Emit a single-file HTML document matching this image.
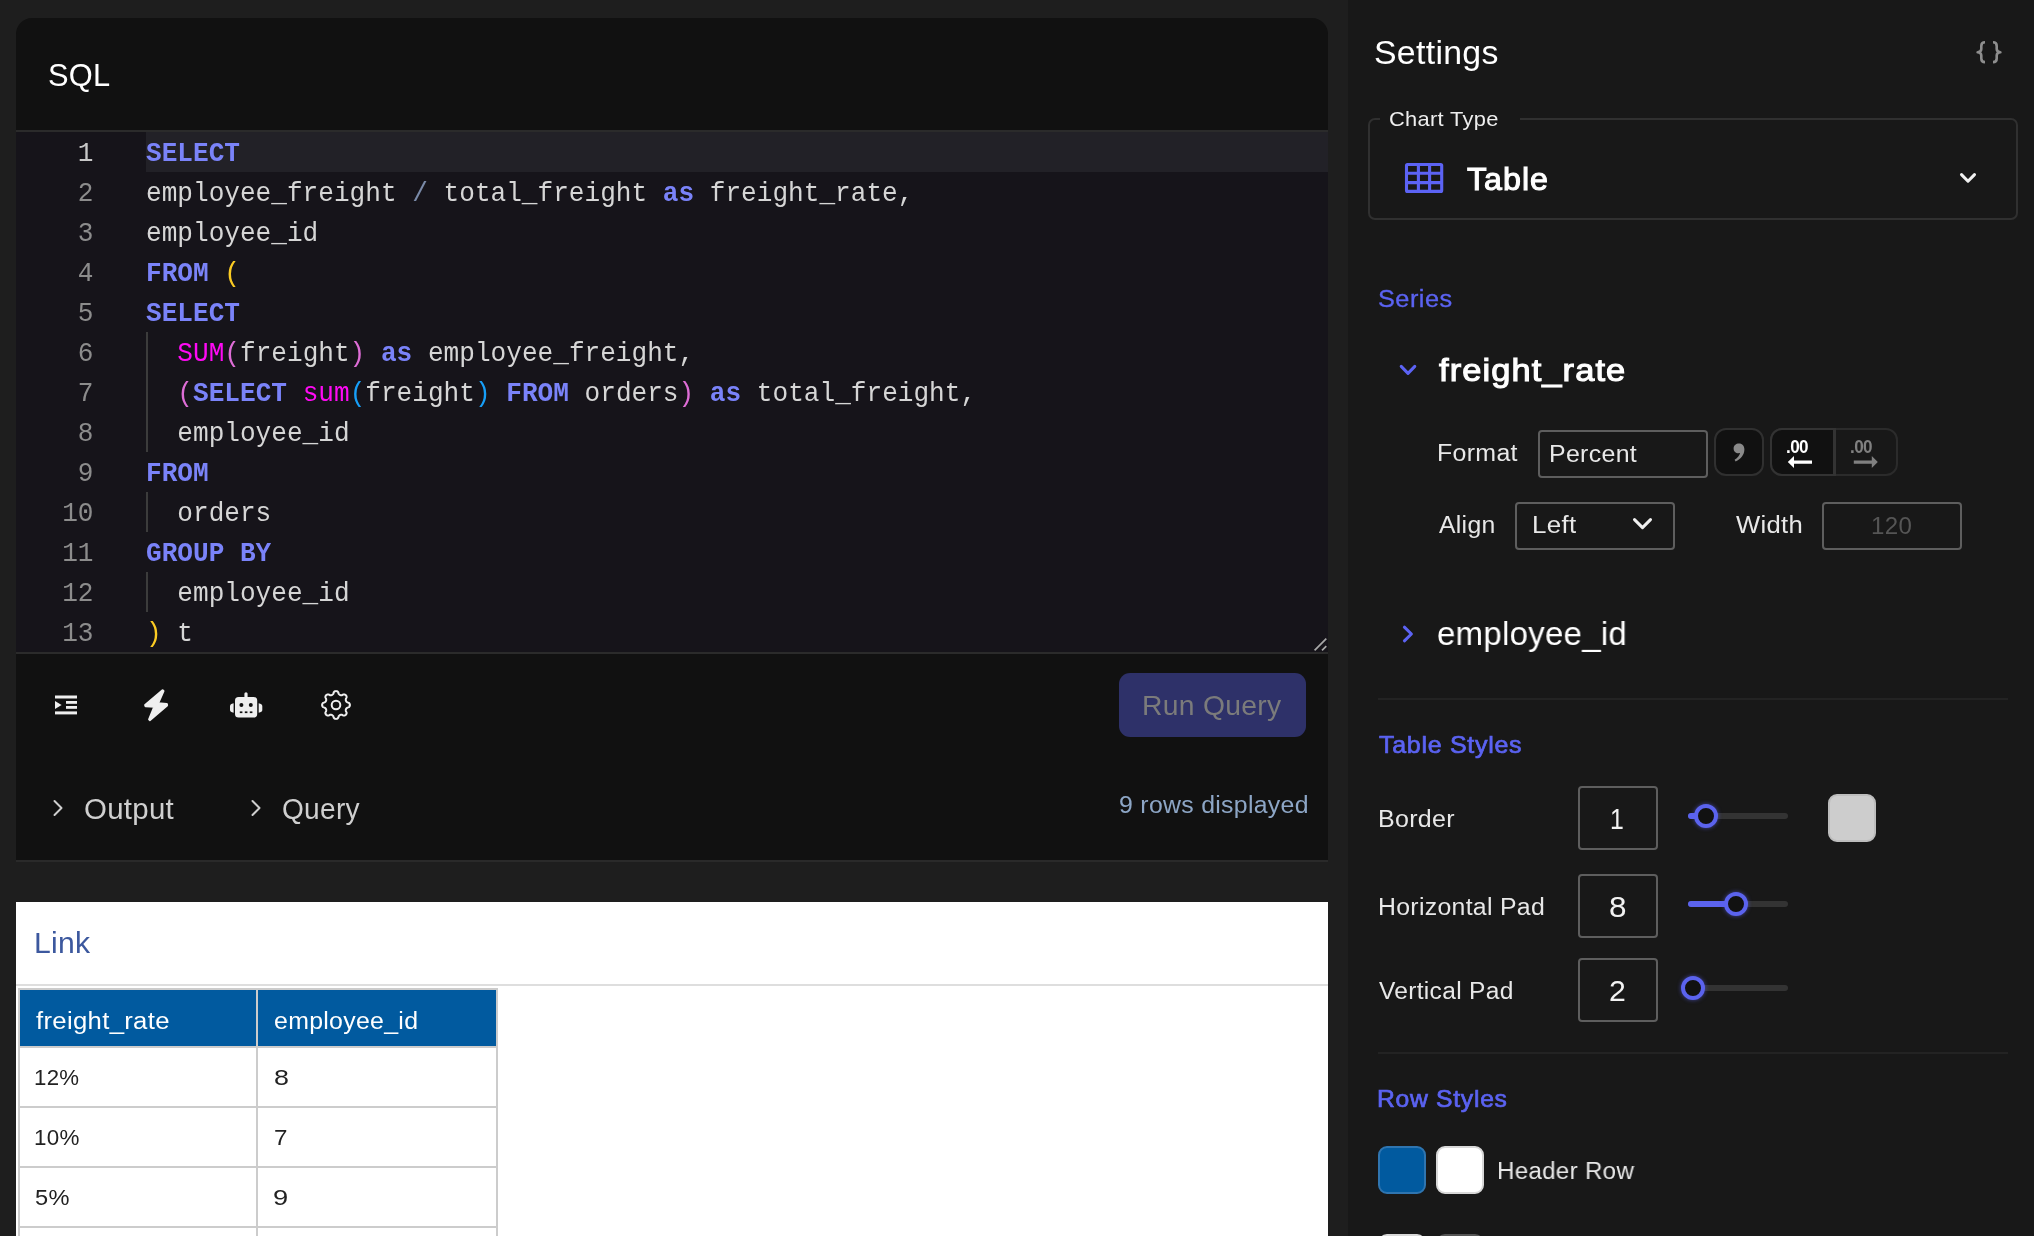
<!DOCTYPE html>
<html>
<head>
<meta charset="utf-8">
<title>SQL</title>
<style>
*{box-sizing:border-box;margin:0;padding:0}
html,body{width:2034px;height:1236px;overflow:hidden;background:#1e1e1e;font-family:"Liberation Sans",sans-serif;color:#e8e8e8}
#wrap{position:absolute;left:0;top:0;width:2034px;height:1236px;will-change:transform}
.abs{position:absolute}
.t{position:absolute;white-space:nowrap;line-height:1}
/* left card */
#card{position:absolute;left:16px;top:18px;width:1312px;height:844px;background:#111111;border-radius:16px 16px 0 0;border-bottom:2px solid #2a2a2a}
#editor{position:absolute;left:16px;top:130px;width:1312px;height:524px;background:#16141a;border-top:2px solid #2b2b2b;border-bottom:2px solid #2b2b2b;overflow:hidden}
#active{position:absolute;left:130px;top:0;width:1182px;height:40px;background:#222127}
.ln{position:absolute;left:0;width:77.5px;margin-top:2px;text-align:right;font-family:"Liberation Mono",monospace;font-size:28px;line-height:40px;color:#8c8c8c;transform:scaleX(.932);transform-origin:100% 0}
.cl{position:absolute;left:130px;margin-top:2px;font-family:"Liberation Mono",monospace;font-size:28px;line-height:40px;color:#d6d6d6;white-space:pre;transform:scaleX(.932);transform-origin:0 0}
.k{color:#7a83f9;font-weight:bold}
.f{color:#ff0af5}
.p1{color:#fbcb23}
.p2{color:#de6dd6}
.p3{color:#179ff8}
.op{color:#7a8aa8}
.guide{position:absolute;left:130px;width:2px;background:#3c3c3c}
/* white panel */
#white{position:absolute;left:16px;top:902px;width:1312px;height:334px;background:#fff}
#whiteline{position:absolute;left:16px;top:984px;width:1312px;height:2px;background:#dedede}
/* right panel */
#right{position:absolute;left:1348px;top:0;width:686px;height:1236px;background:#181818}
.box{position:absolute;border:2px solid #5e5e5e;border-radius:4px;background:#181818}
.hr{position:absolute;left:1378px;width:630px;height:2px;background:#232323}
.track{position:absolute;height:6px;border-radius:3px;background:#333}
.fill{position:absolute;height:6px;border-radius:3px;background:#5b63ee}
.thumb{position:absolute;width:24px;height:24px;border-radius:12px;border:4px solid #5b63ee;background:#111;box-shadow:0 0 4px rgba(91,99,238,.6)}
.sw{position:absolute;width:48px;height:48px;border-radius:9px}
</style>
</head>
<body>
<div id="wrap">
<div id="card"></div>
<div class="t" id="t_sql" style="left:48.2px;top:58.6px;font-size:32.25px;color:#fff;letter-spacing:0.3px;transform:scaleX(0.9554);transform-origin:0 0">SQL</div>
<div id="editor">
  <div id="active"></div>
  <div class="ln" style="top:0px;color:#c8c8c8">1</div><div class="cl" style="top:0px"><span class="k">SELECT</span></div>
  <div class="ln" style="top:40px">2</div><div class="cl" style="top:40px">employee_freight <span class="op">/</span> total_freight <span class="k">as</span> freight_rate,</div>
  <div class="ln" style="top:80px">3</div><div class="cl" style="top:80px">employee_id</div>
  <div class="ln" style="top:120px">4</div><div class="cl" style="top:120px"><span class="k">FROM</span> <span class="p1">(</span></div>
  <div class="ln" style="top:160px">5</div><div class="cl" style="top:160px"><span class="k">SELECT</span></div>
  <div class="ln" style="top:200px">6</div><div class="cl" style="top:200px">  <span class="f">SUM</span><span class="p2">(</span>freight<span class="p2">)</span> <span class="k">as</span> employee_freight,</div>
  <div class="ln" style="top:240px">7</div><div class="cl" style="top:240px">  <span class="p2">(</span><span class="k">SELECT</span> <span class="f">sum</span><span class="p3">(</span>freight<span class="p3">)</span> <span class="k">FROM</span> orders<span class="p2">)</span> <span class="k">as</span> total_freight,</div>
  <div class="ln" style="top:280px">8</div><div class="cl" style="top:280px">  employee_id</div>
  <div class="ln" style="top:320px">9</div><div class="cl" style="top:320px"><span class="k">FROM</span></div>
  <div class="ln" style="top:360px">10</div><div class="cl" style="top:360px">  orders</div>
  <div class="ln" style="top:400px">11</div><div class="cl" style="top:400px"><span class="k">GROUP BY</span></div>
  <div class="ln" style="top:440px">12</div><div class="cl" style="top:440px">  employee_id</div>
  <div class="ln" style="top:480px">13</div><div class="cl" style="top:480px"><span class="p1">)</span> t</div>
  <div class="guide" style="top:200px;height:120px"></div>
  <div class="guide" style="top:360px;height:40px"></div>
  <div class="guide" style="top:440px;height:40px"></div>
</div>
<div id="white"></div>
<div id="whiteline"></div>

<!-- toolbar icons -->
<svg class="abs" style="left:0;top:660px" width="1328" height="100" viewBox="0 660 1328 100">
  <g fill="#efefef">
    <rect x="55" y="695.5" width="22" height="3"/>
    <rect x="66" y="701" width="11" height="2.8"/>
    <rect x="66" y="706" width="11" height="2.8"/>
    <rect x="55" y="711.4" width="22" height="3"/>
    <path d="M55,701 L61.6,705 L55,709 Z"/>
    <path d="M162.6,690.3 L145.2,705 L145.6,706.2 L154.4,706.6 L149.2,719.4 L150,720 L167,705.3 L166.8,704.2 L158,703.4 L163.4,691 Z" stroke="#efefef" stroke-width="2.2" stroke-linejoin="round"/>
    <rect x="235" y="697" width="22.2" height="20.6" rx="3.6"/>
    <rect x="244.4" y="692.2" width="3.2" height="6" rx="1.6"/>
    <path d="M233.6,703.2 Q230,704 230,706 L230,710 Q230,712 233.6,712.8 Z"/>
    <path d="M258.7,703.2 Q262.3,704 262.3,706 L262.3,710 Q262.3,712 258.7,712.8 Z"/>
  </g>
  <g fill="#111">
    <circle cx="241.4" cy="705" r="2"/><circle cx="250.8" cy="705" r="2"/>
    <rect x="239.8" y="711.4" width="2.6" height="1.7"/><rect x="244.8" y="711.4" width="2.6" height="1.7"/><rect x="249.8" y="711.4" width="2.6" height="1.7"/>
  </g>
  <path d="M336.00,691.10 L336.34,691.12 L336.68,691.19 L337.01,691.30 L337.33,691.46 L337.65,691.66 L337.94,691.92 L338.21,692.26 L338.41,692.89 L338.58,693.52 L338.79,693.87 L339.00,694.15 L339.22,694.39 L339.44,694.59 L339.66,694.76 L339.89,694.91 L340.13,695.02 L340.38,695.11 L340.65,695.17 L340.93,695.21 L341.23,695.22 L341.55,695.20 L341.90,695.15 L342.30,695.06 L342.86,694.73 L343.45,694.43 L343.88,694.38 L344.27,694.41 L344.63,694.48 L344.97,694.60 L345.29,694.75 L345.57,694.95 L345.83,695.17 L346.05,695.43 L346.25,695.71 L346.40,696.03 L346.52,696.37 L346.59,696.73 L346.62,697.12 L346.57,697.55 L346.27,698.14 L345.94,698.70 L345.85,699.10 L345.80,699.45 L345.78,699.77 L345.79,700.07 L345.83,700.35 L345.89,700.62 L345.98,700.87 L346.09,701.11 L346.24,701.34 L346.41,701.56 L346.61,701.78 L346.85,702.00 L347.13,702.21 L347.48,702.42 L348.11,702.59 L348.74,702.79 L349.08,703.06 L349.34,703.35 L349.54,703.67 L349.70,703.99 L349.81,704.32 L349.88,704.66 L349.90,705.00 L349.88,705.34 L349.81,705.68 L349.70,706.01 L349.54,706.33 L349.34,706.65 L349.08,706.94 L348.74,707.21 L348.11,707.41 L347.48,707.58 L347.13,707.79 L346.85,708.00 L346.61,708.22 L346.41,708.44 L346.24,708.66 L346.09,708.89 L345.98,709.13 L345.89,709.38 L345.83,709.65 L345.79,709.93 L345.78,710.23 L345.80,710.55 L345.85,710.90 L345.94,711.30 L346.27,711.86 L346.57,712.45 L346.62,712.88 L346.59,713.27 L346.52,713.63 L346.40,713.97 L346.25,714.29 L346.05,714.57 L345.83,714.83 L345.57,715.05 L345.29,715.25 L344.97,715.40 L344.63,715.52 L344.27,715.59 L343.88,715.62 L343.45,715.57 L342.86,715.27 L342.30,714.94 L341.90,714.85 L341.55,714.80 L341.23,714.78 L340.93,714.79 L340.65,714.83 L340.38,714.89 L340.13,714.98 L339.89,715.09 L339.66,715.24 L339.44,715.41 L339.22,715.61 L339.00,715.85 L338.79,716.13 L338.58,716.48 L338.41,717.11 L338.21,717.74 L337.94,718.08 L337.65,718.34 L337.33,718.54 L337.01,718.70 L336.68,718.81 L336.34,718.88 L336.00,718.90 L335.66,718.88 L335.32,718.81 L334.99,718.70 L334.67,718.54 L334.35,718.34 L334.06,718.08 L333.79,717.74 L333.59,717.11 L333.42,716.48 L333.21,716.13 L333.00,715.85 L332.78,715.61 L332.56,715.41 L332.34,715.24 L332.11,715.09 L331.87,714.98 L331.62,714.89 L331.35,714.83 L331.07,714.79 L330.77,714.78 L330.45,714.80 L330.10,714.85 L329.70,714.94 L329.14,715.27 L328.55,715.57 L328.12,715.62 L327.73,715.59 L327.37,715.52 L327.03,715.40 L326.71,715.25 L326.43,715.05 L326.17,714.83 L325.95,714.57 L325.75,714.29 L325.60,713.97 L325.48,713.63 L325.41,713.27 L325.38,712.88 L325.43,712.45 L325.73,711.86 L326.06,711.30 L326.15,710.90 L326.20,710.55 L326.22,710.23 L326.21,709.93 L326.17,709.65 L326.11,709.38 L326.02,709.13 L325.91,708.89 L325.76,708.66 L325.59,708.44 L325.39,708.22 L325.15,708.00 L324.87,707.79 L324.52,707.58 L323.89,707.41 L323.26,707.21 L322.92,706.94 L322.66,706.65 L322.46,706.33 L322.30,706.01 L322.19,705.68 L322.12,705.34 L322.10,705.00 L322.12,704.66 L322.19,704.32 L322.30,703.99 L322.46,703.67 L322.66,703.35 L322.92,703.06 L323.26,702.79 L323.89,702.59 L324.52,702.42 L324.87,702.21 L325.15,702.00 L325.39,701.78 L325.59,701.56 L325.76,701.34 L325.91,701.11 L326.02,700.87 L326.11,700.62 L326.17,700.35 L326.21,700.07 L326.22,699.77 L326.20,699.45 L326.15,699.10 L326.06,698.70 L325.73,698.14 L325.43,697.55 L325.38,697.12 L325.41,696.73 L325.48,696.37 L325.60,696.03 L325.75,695.71 L325.95,695.43 L326.17,695.17 L326.43,694.95 L326.71,694.75 L327.03,694.60 L327.37,694.48 L327.73,694.41 L328.12,694.38 L328.55,694.43 L329.14,694.73 L329.70,695.06 L330.10,695.15 L330.45,695.20 L330.77,695.22 L331.07,695.21 L331.35,695.17 L331.62,695.11 L331.87,695.02 L332.11,694.91 L332.34,694.76 L332.56,694.59 L332.78,694.39 L333.00,694.15 L333.21,693.87 L333.42,693.52 L333.59,692.89 L333.79,692.26 L334.06,691.92 L334.35,691.66 L334.67,691.46 L334.99,691.30 L335.32,691.19 L335.66,691.12Z" fill="none" stroke="#efefef" stroke-width="2"/>
  <circle cx="336" cy="705" r="4.3" fill="none" stroke="#efefef" stroke-width="2"/>
</svg>
<!-- run query -->
<div class="abs" style="left:1119px;top:673px;width:187px;height:64px;background:#2e3169;border-radius:11px"></div>
<div class="t" id="t_run" style="left:1142.0px;top:690.9px;font-size:28.5px;color:#7b7b7b;letter-spacing:0.3px;transform:scaleX(0.9930);transform-origin:0 0">Run Query</div>
<!-- output / query -->
<svg class="abs" style="left:40px;top:790px" width="240" height="36" viewBox="40 790 240 36" fill="none" stroke="#cfcfcf" stroke-width="2" stroke-linecap="round" stroke-linejoin="round">
  <path d="M54.5,801 L61.5,808 L54.5,815"/>
  <path d="M252.5,801 L259.5,808 L252.5,815"/>
</svg>
<div class="t" id="t_output" style="left:83.8px;top:794.0px;font-size:29.3px;color:#cfcfcf;letter-spacing:0.3px;transform:scaleX(1.0038);transform-origin:0 0">Output</div>
<div class="t" id="t_query" style="left:282.3px;top:794.0px;font-size:29.3px;color:#cfcfcf;letter-spacing:0.3px;transform:scaleX(0.9581);transform-origin:0 0">Query</div>
<div class="t" id="t_rows" style="left:1118.9px;top:792.7px;font-size:24.75px;color:#8da6c6;letter-spacing:0.3px;transform:scaleX(1.0034);transform-origin:0 0">9 rows displayed</div>
<!-- resize handle -->
<svg class="abs" style="left:1310px;top:636px" width="18" height="18" viewBox="1310 636 18 18" stroke="#a8a8a8" stroke-width="1.7">
  <path d="M1314.6,650.4 L1326.3,638.7 M1322,650.4 L1326.3,646.1"/>
</svg>
<!-- link + table -->
<div class="t" id="t_link" style="left:34.1px;top:928.1px;font-size:29.3px;color:#3c589e;letter-spacing:0.3px;transform:scaleX(1.0279);transform-origin:0 0">Link</div>
<div class="abs" style="left:18px;top:988px;width:480px;height:248px;background:#cccccc"></div>
<div class="abs" style="left:20px;top:990px;width:236px;height:56px;background:#015a9f"></div>
<div class="abs" style="left:258px;top:990px;width:238px;height:56px;background:#015a9f"></div>
<div class="abs" style="left:20px;top:1048px;width:236px;height:58px;background:#fff"></div>
<div class="abs" style="left:258px;top:1048px;width:238px;height:58px;background:#fff"></div>
<div class="abs" style="left:20px;top:1108px;width:236px;height:58px;background:#fff"></div>
<div class="abs" style="left:258px;top:1108px;width:238px;height:58px;background:#fff"></div>
<div class="abs" style="left:20px;top:1168px;width:236px;height:58px;background:#fff"></div>
<div class="abs" style="left:258px;top:1168px;width:238px;height:58px;background:#fff"></div>
<div class="abs" style="left:20px;top:1228px;width:236px;height:8px;background:#fff"></div>
<div class="abs" style="left:258px;top:1228px;width:238px;height:8px;background:#fff"></div>
<div class="t" id="t_th1" style="left:35.7px;top:1009.0px;font-size:24.75px;color:#fff;letter-spacing:0.3px;transform:scaleX(1.0387);transform-origin:0 0">freight_rate</div>
<div class="t" id="t_th2" style="left:273.5px;top:1009.0px;font-size:24.75px;color:#fff;letter-spacing:0.3px;transform:scaleX(1.0046);transform-origin:0 0">employee_id</div>
<div class="t" id="t_r1" style="left:34.3px;top:1065.7px;font-size:22.75px;color:#222;letter-spacing:0.3px;transform:scaleX(0.9765);transform-origin:0 0">12%</div>
<div class="t" id="t_r2" style="left:34.3px;top:1125.7px;font-size:22.75px;color:#222;letter-spacing:0.3px;transform:scaleX(0.9848);transform-origin:0 0">10%</div>
<div class="t" id="t_r3" style="left:34.9px;top:1185.7px;font-size:22.75px;color:#222;letter-spacing:0.3px;transform:scaleX(1.0380);transform-origin:0 0">5%</div>
<div class="t" id="t_c1" style="left:273.5px;top:1065.7px;font-size:22.75px;color:#222;letter-spacing:0.3px;transform:scaleX(1.1809);transform-origin:0 0">8</div>
<div class="t" id="t_c2" style="left:273.5px;top:1125.7px;font-size:22.75px;color:#222;letter-spacing:0.3px;transform:scaleX(1.0625);transform-origin:0 0">7</div>
<div class="t" id="t_c3" style="left:273.3px;top:1185.7px;font-size:22.75px;color:#222;letter-spacing:0.3px;transform:scaleX(1.1979);transform-origin:0 0">9</div>
<div id="right"></div>
<!-- RIGHT PANEL CONTENT -->
<div class="t" id="t_settings" style="left:1373.8px;top:35.7px;font-size:33.8px;color:#fff;letter-spacing:0.3px;transform:scaleX(1.0013);transform-origin:0 0">Settings</div>
<svg class="abs" style="left:1970px;top:36px" width="40" height="34" viewBox="1970 36 40 34" fill="none" stroke="#8e8e8e" stroke-width="2.6" stroke-linecap="butt" stroke-linejoin="round">
  <path d="M1985,42.3 Q1981.3,42.3 1981.3,46 L1981.3,49 Q1981.3,52 1977.6,52.2 Q1981.3,52.4 1981.3,55.4 L1981.3,58.4 Q1981.3,62.1 1985,62.1"/>
  <path d="M1993,42.3 Q1996.7,42.3 1996.7,46 L1996.7,49 Q1996.7,52 2000.4,52.2 Q1996.7,52.4 1996.7,55.4 L1996.7,58.4 Q1996.7,62.1 1993,62.1"/>
</svg>
<!-- chart type fieldset -->
<div class="abs" style="left:1368px;top:118px;width:650px;height:102px;border:2px solid #303030;border-radius:7px"></div>
<div class="abs" style="left:1380px;top:110px;width:140px;height:20px;background:#181818"></div>
<div class="t" id="t_charttype" style="left:1389.3px;top:108.4px;font-size:21.0px;color:#eeeeee;letter-spacing:0.3px;transform:scaleX(1.0408);transform-origin:0 0">Chart Type</div>
<svg class="abs" style="left:1400px;top:158px" width="50" height="40" viewBox="1400 158 50 40" fill="none" stroke="#5c63f4" stroke-width="3.1">
  <rect x="1406.5" y="164.5" width="35.2" height="26.9" rx="1"/>
  <path d="M1418.4,164.5 V191.4 M1429.6,164.5 V191.4 M1406.5,173.3 H1441.7 M1406.5,182.6 H1441.7"/>
</svg>
<div class="t" id="t_table" style="left:1466.7px;top:163.1px;font-size:32.1px;color:#fff;letter-spacing:1.0px;-webkit-text-stroke:1.1px currentColor;transform:scaleX(1.0030);transform-origin:0 0">Table</div>
<svg class="abs" style="left:1955px;top:168px" width="26" height="20" viewBox="1955 168 26 20" fill="none" stroke="#f0f0f0" stroke-width="3" stroke-linecap="round" stroke-linejoin="round">
  <path d="M1961.5,174.6 L1968,181.2 L1974.5,174.6"/>
</svg>
<!-- series -->
<div class="t" id="t_series" style="left:1377.7px;top:286.9px;font-size:24.7px;color:#5b63f2;letter-spacing:0.5px;-webkit-text-stroke:0.35px currentColor;transform:scaleX(1.0233);transform-origin:0 0">Series</div>
<svg class="abs" style="left:1395px;top:360px" width="26" height="20" viewBox="1395 360 26 20" fill="none" stroke="#5c63f4" stroke-width="3" stroke-linecap="round" stroke-linejoin="round">
  <path d="M1401.2,366.4 L1408,373.4 L1414.8,366.4"/>
</svg>
<div class="t" id="t_fr" style="left:1438.9px;top:353.8px;font-size:32.1px;color:#fff;letter-spacing:1.0px;-webkit-text-stroke:1.1px currentColor;transform:scaleX(1.0747);transform-origin:0 0">freight_rate</div>
<div class="t" id="t_format" style="left:1436.7px;top:441.3px;font-size:24.75px;color:#e8e8e8;letter-spacing:0.3px;transform:scaleX(1.0081);transform-origin:0 0">Format</div>
<div class="box" style="left:1538px;top:430px;width:170px;height:48px"></div>
<div class="t" id="t_percent" style="left:1549.3px;top:441.8px;font-size:24.75px;color:#e8e8e8;letter-spacing:0.3px;transform:scaleX(1.0073);transform-origin:0 0">Percent</div>
<!-- comma btn -->
<div class="abs" style="left:1714px;top:428px;width:50px;height:48px;border:2px solid #303030;border-radius:12px;background:#111"></div>
<svg class="abs" style="left:1728px;top:438px" width="24" height="28" viewBox="1728 438 24 28" fill="#8a8a8a">
  <path d="M1739,443.4 C1742.4,443.4 1744.4,446 1744.4,449.4 C1744.4,454.4 1741,459 1735.6,461.4 L1734.6,459.8 C1737.8,457.8 1739.6,455.4 1740,453 C1736.4,453.8 1733.6,451.6 1733.6,448.4 C1733.6,445.4 1736,443.4 1739,443.4 Z"/>
</svg>
<!-- decimals group -->
<div class="abs" style="left:1770px;top:428px;width:128px;height:48px;border:2px solid #2b2b2b;border-radius:12px;background:#181818"></div>
<div class="abs" style="left:1770px;top:428px;width:65.5px;height:48px;border:2px solid #333;border-right-width:3.5px;border-radius:12px 0 0 12px;background:#111"></div>
<div class="t" id="t_d1" style="left:1786px;top:437.5px;font-size:18px;font-weight:bold;color:#fff;letter-spacing:-0.6px;transform:scaleX(.95);transform-origin:0 0">.00</div>
<div class="t" id="t_d2" style="left:1850px;top:437.5px;font-size:18px;font-weight:bold;color:#808080;letter-spacing:-0.6px;transform:scaleX(.95);transform-origin:0 0">.00</div>
<svg class="abs" style="left:1780px;top:452px" width="110" height="20" viewBox="1780 452 110 20">
  <path d="M1787.8,462 L1794,456 L1794,460.4 L1812,460.4 L1812,463.8 L1794,463.8 L1794,468 Z" fill="#fff"/>
  <path d="M1877.8,462 L1871.8,456 L1871.8,460.4 L1853.8,460.4 L1853.8,463.8 L1871.8,463.8 L1871.8,468 Z" fill="#808080"/>
</svg>
<!-- align / width -->
<div class="t" id="t_align" style="left:1439.0px;top:513.0px;font-size:24.75px;color:#e8e8e8;letter-spacing:0.3px;transform:scaleX(1.0007);transform-origin:0 0">Align</div>
<div class="box" style="left:1515px;top:502px;width:160px;height:48px"></div>
<div class="t" id="t_left" style="left:1531.9px;top:513.3px;font-size:24.75px;color:#e8e8e8;letter-spacing:0.3px;transform:scaleX(1.0481);transform-origin:0 0">Left</div>
<svg class="abs" style="left:1628px;top:512px" width="30" height="24" viewBox="1628 512 30 24" fill="none" stroke="#f0f0f0" stroke-width="3" stroke-linecap="round" stroke-linejoin="round">
  <path d="M1634.5,519.6 L1642.5,527.6 L1650.5,519.6"/>
</svg>
<div class="t" id="t_width" style="left:1735.7px;top:513.1px;font-size:24.75px;color:#e8e8e8;letter-spacing:0.3px;transform:scaleX(1.0357);transform-origin:0 0">Width</div>
<div class="box" style="left:1822px;top:502px;width:140px;height:48px"></div>
<div class="t" id="t_120" style="left:1870.8px;top:513.8px;font-size:24.5px;color:#555;letter-spacing:0.3px;transform:scaleX(0.9832);transform-origin:0 0">120</div>
<!-- employee_id -->
<svg class="abs" style="left:1396px;top:620px" width="24" height="28" viewBox="1396 620 24 28" fill="none" stroke="#5c63f4" stroke-width="3" stroke-linecap="round" stroke-linejoin="round">
  <path d="M1404.4,627.2 L1411.4,634 L1404.4,640.8"/>
</svg>
<div class="t" id="t_emp" style="left:1437.0px;top:616.9px;font-size:33.8px;color:#fff;letter-spacing:0.3px;transform:scaleX(0.9752);transform-origin:0 0">employee_id</div>
<div class="hr" style="top:698px"></div>
<!-- table styles -->
<div class="t" id="t_ts" style="left:1378.6px;top:733.3px;font-size:24.5px;color:#5b63f2;letter-spacing:0.7px;-webkit-text-stroke:0.7px currentColor;transform:scaleX(1.0199);transform-origin:0 0">Table Styles</div>
<div class="t" id="t_border" style="left:1377.7px;top:807.0px;font-size:24.75px;color:#e8e8e8;letter-spacing:0.3px;transform:scaleX(1.0093);transform-origin:0 0">Border</div>
<div class="box" style="left:1578px;top:786px;width:80px;height:64px"></div>
<div class="t" id="t_v1" style="left:1609.6px;top:804.3px;font-size:29.4px;color:#f2f2f2;letter-spacing:0.3px;transform:scaleX(0.8440);transform-origin:0 0">1</div>
<div class="track" style="left:1688px;top:813px;width:100px"></div>
<div class="fill" style="left:1688px;top:813px;width:16px"></div>
<div class="thumb" style="left:1694px;top:804px"></div>
<div class="sw" style="left:1828px;top:794px;background:#cdcdcd;border:2px solid #bdbdbd"></div>
<div class="t" id="t_hpad" style="left:1377.7px;top:895.2px;font-size:24.75px;color:#e8e8e8;letter-spacing:0.3px;transform:scaleX(1.0032);transform-origin:0 0">Horizontal Pad</div>
<div class="box" style="left:1578px;top:874px;width:80px;height:64px"></div>
<div class="t" id="t_v8" style="left:1609.0px;top:892.3px;font-size:29.4px;color:#f2f2f2;letter-spacing:0.3px;transform:scaleX(1.0727);transform-origin:0 0">8</div>
<div class="track" style="left:1688px;top:901px;width:100px"></div>
<div class="fill" style="left:1688px;top:901px;width:46px"></div>
<div class="thumb" style="left:1724px;top:892px"></div>
<div class="t" id="t_vpad" style="left:1379.3px;top:979.3px;font-size:24.75px;color:#e8e8e8;letter-spacing:0.3px;transform:scaleX(0.9919);transform-origin:0 0">Vertical Pad</div>
<div class="box" style="left:1578px;top:958px;width:80px;height:64px"></div>
<div class="t" id="t_v2" style="left:1609.3px;top:976.3px;font-size:29.4px;color:#f2f2f2;letter-spacing:0.3px;transform:scaleX(1.0286);transform-origin:0 0">2</div>
<div class="track" style="left:1688px;top:985px;width:100px"></div>
<div class="thumb" style="left:1681px;top:976px"></div>
<div class="hr" style="top:1052px"></div>
<!-- row styles -->
<div class="t" id="t_rs" style="left:1377.4px;top:1086.5px;font-size:24.5px;color:#5b63f2;letter-spacing:0.7px;-webkit-text-stroke:0.7px currentColor;transform:scaleX(1.0085);transform-origin:0 0">Row Styles</div>
<div class="sw" style="left:1378px;top:1146px;background:#015a9f;border:2px solid #2f75b0"></div>
<div class="sw" style="left:1436px;top:1146px;background:#fff;border:2px solid #d8d8d8"></div>
<div class="t" id="t_hrow" style="left:1496.9px;top:1158.5px;font-size:24.75px;color:#e8e8e8;letter-spacing:0.3px;transform:scaleX(0.9752);transform-origin:0 0">Header Row</div>
<div class="sw" style="left:1378px;top:1234px;background:#f2f2f2;border:2px solid #d8d8d8"></div>
<div class="sw" style="left:1436px;top:1234px;background:#444;border:2px solid #555"></div>

</div>
</body>
</html>
